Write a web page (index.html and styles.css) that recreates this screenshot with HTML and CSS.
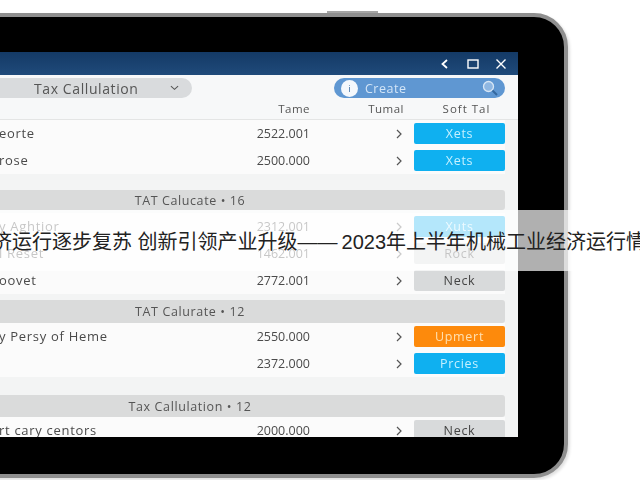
FILE: index.html
```html
<!DOCTYPE html>
<html lang="zh-CN">
<head>
    <meta charset="UTF-8">
    <title>Tax Calculation</title>
    <link rel="stylesheet" href="styles.css">
</head>
<body>
    <div class="tablet">
        <div class="side-button"></div>
        <div class="screen">
            <!-- Title bar -->
            <div class="title-bar">
                <svg class="win-icon" viewBox="0 0 12 12"><path d="M8 2 3.5 6 8 10" fill="none" stroke="#fff" stroke-width="1.8"/></svg>
                <svg class="win-icon" viewBox="0 0 12 12"><rect x="1" y="2" width="10" height="8" fill="none" stroke="#fff" stroke-width="1.4"/></svg>
                <svg class="win-icon" viewBox="0 0 12 12"><path d="M1.5 1.5 10.5 10.5M10.5 1.5 1.5 10.5" fill="none" stroke="#fff" stroke-width="1.4"/></svg>
            </div>

            <!-- Toolbar -->
            <div class="toolbar">
                <div class="select-pill">
                    <span>Tax Callulation</span>
                    <svg class="select-arrow" viewBox="0 0 10 6"><path d="M1 1 5 4.5 9 1" fill="none" stroke="#555" stroke-width="1.2"/></svg>
                </div>
                <div class="search-pill">
                    <span class="search-badge">i</span>
                    <span class="search-label">Create</span>
                    <svg class="search-icon" viewBox="0 0 18 18"><circle cx="7.5" cy="7.5" r="5" fill="#8fb7e2" stroke="#d7e6f5" stroke-width="1.3"/><path d="M11.5 11.5 16 16" stroke="#35689f" stroke-width="2"/></svg>
                </div>
            </div>

            <!-- Table -->
            <div class="row head-row">
                <span></span>
                <span class="value">Tame</span>
                <span class="total">Tumal</span>
                <span class="soft">Soft Tal</span>
            </div>

            <div class="row">
                <span class="name">eorte</span>
                <span class="value">2522.001</span>
                <svg class="chevron" viewBox="0 0 8 10"><path d="M2 1 6 5 2 9" fill="none" stroke="#555" stroke-width="1.2"/></svg>
                <span class="action blue">Xets</span>
            </div>
            <div class="row">
                <span class="name">rose</span>
                <span class="value">2500.000</span>
                <svg class="chevron" viewBox="0 0 8 10"><path d="M2 1 6 5 2 9" fill="none" stroke="#555" stroke-width="1.2"/></svg>
                <span class="action blue">Xets</span>
            </div>

            <div class="section first">TAT Calucate • 16</div>
            <div class="row">
                <span class="name">y Aghtior</span>
                <span class="value">2312.001</span>
                <svg class="chevron" viewBox="0 0 8 10"><path d="M2 1 6 5 2 9" fill="none" stroke="#555" stroke-width="1.2"/></svg>
                <span class="action blue">Xuts</span>
            </div>
            <div class="row">
                <span class="name">l Reset</span>
                <span class="value">1462.001</span>
                <svg class="chevron" viewBox="0 0 8 10"><path d="M2 1 6 5 2 9" fill="none" stroke="#555" stroke-width="1.2"/></svg>
                <span class="action gray">Rock</span>
            </div>
            <div class="row">
                <span class="name">oovet</span>
                <span class="value">2772.001</span>
                <svg class="chevron" viewBox="0 0 8 10"><path d="M2 1 6 5 2 9" fill="none" stroke="#555" stroke-width="1.2"/></svg>
                <span class="action gray">Neck</span>
            </div>

            <div class="section second">TAT Calurate • 12</div>
            <div class="row">
                <span class="name">y Persy of Heme</span>
                <span class="value">2550.000</span>
                <svg class="chevron" viewBox="0 0 8 10"><path d="M2 1 6 5 2 9" fill="none" stroke="#555" stroke-width="1.2"/></svg>
                <span class="action orange">Upmert</span>
            </div>
            <div class="row">
                <span class="name"></span>
                <span class="value">2372.000</span>
                <svg class="chevron" viewBox="0 0 8 10"><path d="M2 1 6 5 2 9" fill="none" stroke="#555" stroke-width="1.2"/></svg>
                <span class="action blue">Prcies</span>
            </div>

            <div class="section third">Tax Callulation • 12</div>
            <div class="row">
                <span class="name">rt cary centors</span>
                <span class="value">2000.000</span>
                <svg class="chevron" viewBox="0 0 8 10"><path d="M2 1 6 5 2 9" fill="none" stroke="#555" stroke-width="1.2"/></svg>
                <span class="action gray">Neck</span>
            </div>
        </div>
    </div>

    <!-- Caption band over the photo -->
    <div class="caption">
        <div class="caption-text">经济运行逐步复苏 创新引领产业升级<span class="caption-dash">——</span>2023年上半年机械工业经济运行情况</div>
    </div>
</body>
</html>
```

FILE: styles.css
```css
/* Base */
* {
    margin: 0;
    padding: 0;
    box-sizing: border-box;
}

html, body {
    width: 640px;
    height: 480px;
    overflow: hidden;
    background: white;
}

body {
    position: relative;
    font-family: "Open Sans", "Noto Sans", sans-serif;
    font-size: 12.5px;
    color: #4a4a4a;
}

/* Tablet */
.tablet {
    position: relative;
    width: 738px;
    height: 465px;
    margin: 13px 0 0 -170px;
    padding: 35px 46px 38px 41px;
    background: black;
    border: 4px solid #8f8f8f;
    border-radius: 34px;
    box-shadow: 2px 2px 3px rgba(0,0,0,0.12);
}

.side-button {
    position: absolute;
    top: -6px;
    left: 493px;
    width: 51px;
    height: 2px;
    background: #a5a5a5;
}

.screen {
    height: 385px;
    overflow: hidden;
    background: #f3f4f4;
    filter: blur(0.45px);
}

/* Title bar */
.title-bar {
    display: flex;
    justify-content: flex-end;
    align-items: center;
    gap: 16px;
    height: 23px;
    padding-right: 11px;
    background: linear-gradient(#143a66, #1f4a7a);
}

.win-icon {
    width: 12px;
    height: 12px;
}

/* Toolbar */
.toolbar {
    display: flex;
    justify-content: space-between;
    align-items: flex-start;
    height: 25px;
    padding: 3px 13px 0 85px;
    background: #f7f8f9;
}

.select-pill {
    display: flex;
    align-items: center;
    width: 232px;
    height: 20px;
    padding-left: 74px;
    background: #d9dbdd;
    border-radius: 10px;
    font-size: 14px;
    letter-spacing: 0.6px;
    color: #555;
}

.select-arrow {
    width: 9px;
    height: 6px;
    margin-left: 31px;
}

.search-pill {
    display: flex;
    align-items: center;
    width: 171px;
    height: 20px;
    padding: 0 6px 0 7px;
    background: #5f97d2;
    border-radius: 10px;
}

.search-badge {
    display: flex;
    align-items: center;
    justify-content: center;
    width: 17px;
    height: 17px;
    background: #f4f8fc;
    border-radius: 50%;
    font-size: 9px;
    color: #35689f;
}

.search-label {
    flex: 1;
    margin-left: 7px;
    font-size: 12.5px;
    letter-spacing: 0.5px;
    color: #d3e5f7;
}

.search-icon {
    width: 18px;
    height: 18px;
}

/* Table rows */
.row {
    display: grid;
    grid-template-columns: 1fr 60px 104px 91px;
    align-items: center;
    height: 27px;
    margin-right: 13px;
    background: #fbfbfb;
}

.head-row {
    height: 20px;
    margin-right: 0;
    padding-right: 13px;
    padding-bottom: 2px;
    background: #f7f8f9;
    border-bottom: 1px solid #e4e5e5;
    font-size: 11.5px;
    letter-spacing: 0.5px;
    color: #555;
}

.name {
    padding-left: 124px;
    padding-bottom: 2px;
    font-size: 13px;
    letter-spacing: 0.7px;
    white-space: nowrap;
}

.value {
    text-align: right;
    white-space: nowrap;
}

.total {
    padding-right: 10px;
    text-align: right;
}

.soft {
    padding-left: 14px;
    text-align: center;
    letter-spacing: 1px;
}

.chevron {
    justify-self: end;
    width: 8px;
    height: 10px;
    margin-right: 11px;
}

.action {
    display: flex;
    align-items: center;
    justify-content: center;
    height: 21px;
    border-radius: 2px;
    font-size: 12.5px;
    letter-spacing: 0.7px;
}

.blue {
    background: #0fb0f0;
    color: #c4f0ff;
}

.orange {
    background: #fd8a0c;
    color: #ffe0b0;
}

.gray {
    background: #d8dadb;
    color: #444;
}

/* Section bars */
.section {
    display: flex;
    align-items: center;
    justify-content: center;
    margin-right: 13px;
    background: #dadbdb;
    border-radius: 0 3px 3px 0;
    font-size: 12.5px;
    letter-spacing: 0.6px;
    color: #555;
}

.section.first {
    height: 20px;
    margin-top: 16px;
    margin-bottom: 3px;
}

.section.second {
    height: 23px;
    margin-top: 6px;
}

.section.third {
    height: 22px;
    margin-top: 18px;
}

/* Caption band */
.caption {
    position: absolute;
    top: 210px;
    left: 0;
    right: 0;
    display: flex;
    align-items: center;
    height: 61px;
    overflow: hidden;
    background: rgba(255,255,255,0.69);
}

.caption-text {
    margin-left: -28px;
    font-family: "Liberation Sans", "Noto Sans CJK SC", sans-serif;
    font-size: 20px;
    white-space: nowrap;
    color: #222;
}

.caption-dash {
    margin-right: 4px;
}
```
